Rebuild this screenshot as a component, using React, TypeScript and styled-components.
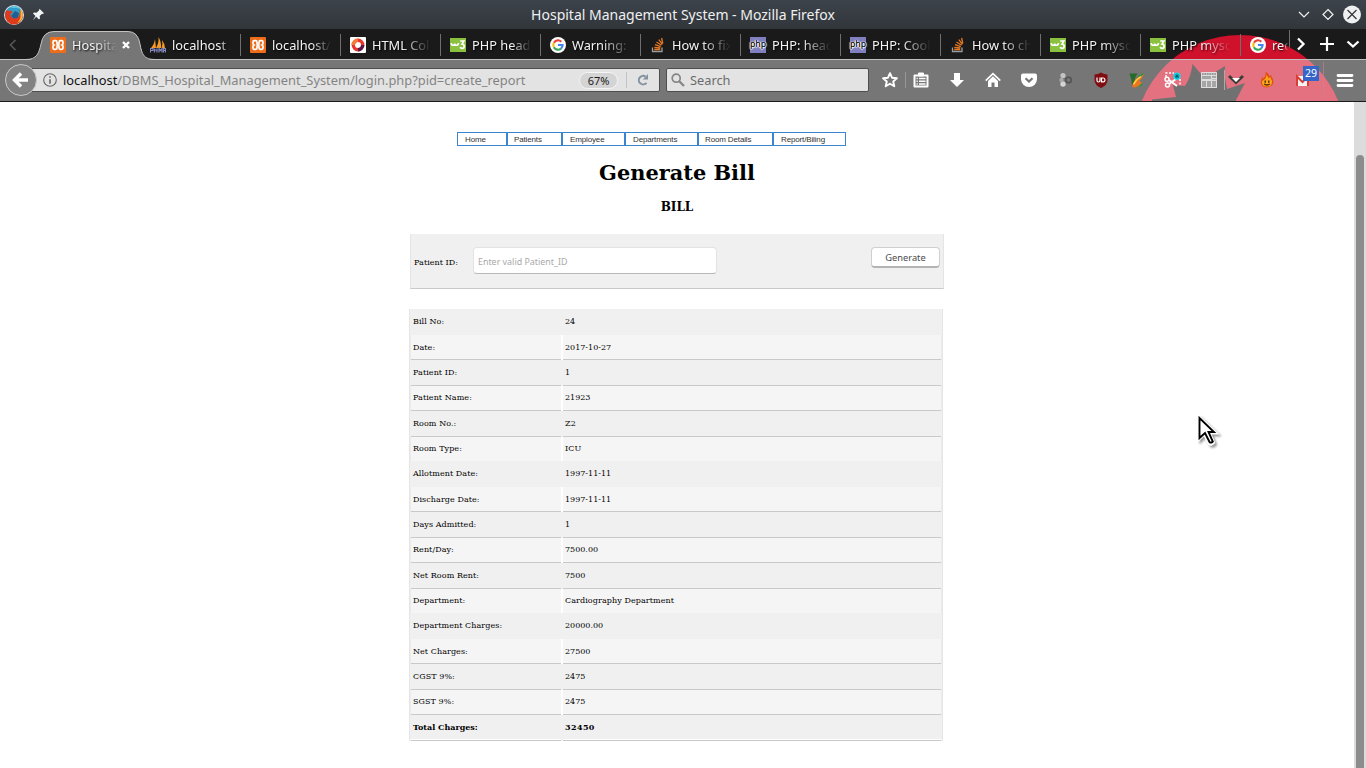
import React from "react";
import styled, { createGlobalStyle } from "styled-components";

const GlobalStyle = createGlobalStyle`
  * { box-sizing: border-box; }
  html, body { margin: 0; padding: 0; overflow: hidden; background: #fff; }
`;

const Window = styled.div`
  width: 1366px;
  height: 768px;
  display: flex;
  flex-direction: column;
  overflow: hidden;
  position: relative;
  font-family: "Noto Sans", sans-serif;
  background: #fff;
`;

const TitleBar = styled.header`
  height: 29px;
  flex: none;
  display: grid;
  grid-template-columns: 100px 1fr 100px;
  align-items: center;
  background: linear-gradient(#3d434b, #30363a);
`;
const TitleLeft = styled.div`
  display: flex;
  align-items: center;
  gap: 8px;
  padding-left: 4px;
`;
const Title = styled.div`
  text-align: center;
  color: #eff0f1;
  font-size: 14px;
  line-height: 29px;
  white-space: nowrap;
`;
const TitleRight = styled.div`
  display: flex;
  align-items: center;
  justify-content: flex-end;
  padding-right: 5px;
`;

const Chrome = styled.div`
  position: relative;
  flex: none;
  height: 73px;
  display: flex;
  flex-direction: column;
  background: #1a1a1a;
`;
const Persona = styled.svg<{ $left: number }>`
  position: absolute;
  left: ${(p) => p.$left}px;
  top: 0;
`;
const TabStrip = styled.div`
  height: 30px;
  display: flex;
  position: relative;
`;
const ScrollLeft = styled.div`
  width: 28px;
  padding: 7px 0 0 8px;
`;
const ActiveTab = styled.div`
  width: 122px;
  height: 30px;
  position: relative;
  display: flex;
  align-items: center;
  padding: 2px 0 0 22px;
`;
const ActiveShape = styled.svg`
  position: absolute;
  left: -2px;
  top: 0;
`;
const Tab = styled.div<{ $width?: number }>`
  width: ${(p) => p.$width ?? 100}px;
  height: 30px;
  flex: none;
  display: flex;
  align-items: center;
  padding-top: 2px;
  position: relative;
`;
const Separator = styled.i<{ $h?: number; $space?: string }>`
  width: 1px;
  height: ${(p) => p.$h ?? 22}px;
  margin: ${(p) => p.$space ?? "0"};
  flex: none;
  background: #6f6f6f;
`;
const TabIcon = styled.span`
  width: 16px;
  height: 16px;
  flex: none;
  position: relative;
  display: block;
  svg { display: block; }
`;
const TabLabel = styled.span<{ $width?: number; $fade?: number }>`
  position: relative;
  margin-left: 6px;
  width: ${(p) => p.$width ?? 60}px;
  height: 22px;
  flex: none;
  overflow: hidden;
  white-space: nowrap;
  color: #f4f4f4;
  font-size: 12.8px;
  line-height: 22px;
  text-shadow: 1px 1px 2px #000;
  mask-image: linear-gradient(to right, #000 ${(p) => p.$fade ?? 50}%, transparent 98%);
`;
const TabClose = styled.svg`
  position: relative;
  margin-left: 4px;
`;
const TabTools = styled.div`
  display: flex;
  align-items: center;
  svg { flex: none; position: relative; }
`;
const ToolSlot = styled.span<{ $left: number }>`
  display: flex;
  margin-left: ${(p) => p.$left}px;
`;

const NavBar = styled.div`
  height: 43px;
  display: flex;
  align-items: flex-start;
  background: #767676;
  border-top: 1px solid #c0c0c0;
  border-bottom: 1px solid #1a1a1a;
  padding-left: 4px;
`;
const NavBarContent = styled.div`
  display: flex;
  align-items: center;
  position: relative;
  height: 40px;
`;
const BackButton = styled.svg`
  flex: none;
  position: relative;
  z-index: 1;
`;
const UrlBar = styled.div`
  width: 630px;
  height: 24px;
  margin-left: -8px;
  display: flex;
  align-items: center;
  background: #e3e3e3;
  border: 1px solid #4e4e4e;
  border-radius: 2px;
  padding: 0 10px 0 12px;
`;
const UrlText = styled.div`
  flex: 1;
  margin-left: 6px;
  font-size: 12.85px;
  line-height: 22px;
  color: #838383;
  white-space: nowrap;
  b { color: #111; font-weight: 400; }
`;
const ZoomBadge = styled.span`
  width: 39px;
  height: 17px;
  border: 1px solid #f5f5f5;
  border-radius: 9px;
  background: #d4d4d4;
  color: #1b1b1b;
  text-align: center;
  font-size: 11px;
  line-height: 15px;
`;
const UrlDivider = styled.i`
  width: 1px;
  height: 16px;
  margin: 0 10px 0 8px;
  background: #c3c3c3;
`;
const SearchBar = styled.div`
  width: 203px;
  height: 24px;
  margin-left: 6px;
  display: flex;
  align-items: center;
  gap: 5px;
  padding-left: 4px;
  background: #e3e3e3;
  border: 1px solid #4e4e4e;
  border-radius: 2px;
  color: #6b6b6b;
  font-size: 12.8px;
  line-height: 22px;
`;
const ToolIcon = styled.span<{ $left: number; $w?: number }>`
  position: relative;
  display: flex;
  justify-content: center;
  flex: none;
  width: ${(p) => p.$w ?? 18}px;
  margin-left: ${(p) => p.$left}px;
  svg { display: block; flex: none; overflow: visible; }
`;
const MailBadge = styled.span`
  position: absolute;
  left: 1299px;
  top: 6px;
  width: 16px;
  height: 15px;
  background: #3665c8;
  color: #fff;
  font-size: 10.5px;
  line-height: 14px;
  text-align: center;
`;

const Viewport = styled.div`
  flex: 1;
  display: flex;
  min-height: 0;
`;
const Page = styled.main`
  width: 1354px;
  display: flex;
  flex-direction: column;
  align-items: flex-start;
  font-family: "DejaVu Serif", serif;
  color: #000;
`;
const ScrollTrack = styled.div`
  width: 12px;
  background: #dcdcdc;
  padding: 53px 2px 0 2px;
`;
const ScrollThumb = styled.div`
  height: 640px;
  border-radius: 4px;
  background: #8c8c8c;
`;

const Menu = styled.nav`
  display: flex;
  margin: 30px 0 0 457px;
`;
const MenuItem = styled.a<{ $w: number; $pad?: number }>`
  width: ${(p) => p.$w}px;
  height: 14px;
  border: 1px solid #3b84d0;
  padding-left: ${(p) => p.$pad ?? 7}px;
  font-family: "Liberation Sans", sans-serif;
  font-size: 8px;
  letter-spacing: -0.14px;
  line-height: 13px;
  color: #333;
  white-space: nowrap;
`;
const Heading = styled.h1`
  width: 1354px;
  margin: 14px 0 0;
  text-align: center;
  font-size: 20.9px;
  line-height: 26px;
`;
const SubHeading = styled.h2`
  width: 1354px;
  margin: 13px 0 0;
  text-align: center;
  font-size: 12px;
  line-height: 16px;
`;
const BillForm = styled.form`
  width: 534px;
  height: 55px;
  margin: 19px 0 0 410px;
  display: flex;
  align-items: flex-start;
  background: #f0f0f0;
  border: solid #e5e5e5;
  border-width: 0 1px;
  border-bottom: 1px solid #c9c9c9;
  padding: 13px 3px 0;
`;
const FormLabel = styled.label`
  width: 59px;
  font-size: 8px;
  letter-spacing: 0.05px;
  line-height: 31px;
  white-space: nowrap;
`;
const PatientInput = styled.input`
  width: 244px;
  height: 27px;
  border: 1px solid #e3e3e3;
  border-bottom: 1px solid #b8b8b8;
  border-radius: 4px;
  background: #fff;
  padding: 2px 4px 0;
  font-family: "Noto Sans", sans-serif;
  font-size: 8.9px;
  outline: none;
  &::placeholder { color: #a9a9a9; opacity: 1; }
`;
const GenerateButton = styled.button`
  width: 69px;
  height: 21px;
  margin-left: auto;
  border: 1px solid #cfcfcf;
  border-bottom: 2px solid #b4b4b4;
  border-radius: 4px;
  background: #fff;
  padding: 1px 0 0;
  color: #4a4a4a;
  font-family: "Noto Sans", sans-serif;
  font-size: 9.3px;
  line-height: 18px;
`;
const BillTable = styled.div`
  width: 534px;
  margin: 20px 0 0 409px;
`;
const BillRow = styled.div<{ $h: number; $alt: boolean; $bold: boolean }>`
  height: ${(p) => p.$h}px;
  display: flex;
  gap: 2px;
  background: ${(p) => (p.$alt ? "#fff" : "#f0f0f0")};
  border: solid #e5e5e5;
  border-width: 0 1px;
  box-shadow: ${(p) => (p.$alt ? "inset 1px 0 #ebebeb, inset -1px 0 #ebebeb" : "none")};
  padding: 0 1px;
  font-size: 8px;
  font-weight: ${(p) => (p.$bold ? 700 : 400)};
`;
const Cell = styled.div<{ $w: number; $track: number; $alt: boolean; $line: boolean; $lift: boolean; $last: boolean }>`
  width: ${(p) => p.$w}px;
  padding-left: 2px;
  letter-spacing: ${(p) => p.$track}px;
  background: ${(p) => (p.$alt ? "#f5f5f5" : "#f0f0f0")};
  border-bottom: ${(p) => (p.$line ? "1px solid #c9c9c9" : "0")};
  box-shadow: ${(p) => (p.$last ? "inset 0 -1px #fff" : "none")};
  line-height: ${(p) => (p.$lift ? 23 : 25)}px;
  white-space: nowrap;
`;

const Cursor = styled.svg`
  position: absolute;
  left: 1196px;
  top: 415px;
  filter: drop-shadow(2px 2px 1px rgba(0, 0, 0, 0.4));
`;

const XamppIcon = () => (
  <svg width="16" height="16" viewBox="0 0 16 16">
    <rect width="16" height="16" rx="1" fill="#ee6d1b" />
    <path d="M7 6.700V5.200q0-1.500-1.500-1.500H4.300Q3 3.700 3 5v1.500Q3 8 4.500 8 3 8 3 9.500V11q0 1.300 1.300 1.300h1.200Q7 12.300 7 11V9.300q0-1.300 1-1.300t1 1.300V11q0 1.300 1.500 1.300h1.200Q13 12.300 13 11V9.500Q13 8 11.500 8 13 8 13 6.500V5q0-1.300-1.300-1.300h-1.200Q9 3.700 9 5.200v1.500Q9 8 8 8T7 6.700z" fill="none" stroke="#fff" strokeWidth="1.700" strokeLinejoin="round" />
  </svg>
);
const PmaIcon = () => (
  <svg width="16" height="16" viewBox="0 0 16 16">
    <path d="M1 11Q4 8 5 2l1 9z M6 11Q9 6 8.500 0q3 5 2.500 11z M11.500 11q1.500-4 .5-8 3 4 3 8z" fill="#f59a23" />
    <path d="M.5 15.500v-4h2.500v2H1M4.500 11.500v4M4.500 13h2.500M7 11.500v4M9 15.500v-4l1.500 2 1.500-2v4M13.500 15.500v-4H15.500v4M13.500 13.500h2" fill="none" stroke="#8588bd" strokeWidth="1.200" />
  </svg>
);
const HtmlColorIcon = () => (
  <svg width="16" height="16" viewBox="0 0 16 16">
    <rect width="16" height="16" rx="1" fill="#fff" />
    <circle cx="8" cy="8" r="4.700" fill="none" stroke="#e8352e" strokeWidth="3.400" />
    <path d="M8 3.300a4.700 4.700 0 0 0-4.700 4.700" fill="none" stroke="#f47b35" strokeWidth="3.400" />
    <path d="M12.700 8A4.700 4.700 0 0 1 8 12.700" fill="none" stroke="#5b1748" strokeWidth="3.400" />
  </svg>
);
const W3Icon = () => (
  <svg width="16" height="16" viewBox="0 0 16 16">
    <rect y="1" width="16" height="14" fill="#8ac240" />
    <path d="M1.300 6q0 2.300 1.700 2.300T4.700 6.500q0 1.800 1.700 1.800T8.600 6" fill="none" stroke="#fff" strokeWidth="1.600" />
    <path d="M10.200 4h3.600l-1.800 3q2.200.2 2.200 2.200t-2.100 2.200q-1.400 0-2-1.200" fill="none" stroke="#fff" strokeWidth="1.700" />
  </svg>
);
const GoogleIcon = () => (
  <svg width="16" height="16" viewBox="0 0 16 16">
    <circle cx="8" cy="8" r="8" fill="#fff" />
    <g fill="none" strokeWidth="2.100">
      <path d="M11.300 4.700A4.700 4.700 0 0 0 3.900 5.700" stroke="#ea4335" />
      <path d="M3.900 5.700a4.700 4.700 0 0 0 0 4.600" stroke="#fbbc05" />
      <path d="M3.900 10.300a4.700 4.700 0 0 0 7.100 1.300" stroke="#34a853" />
      <path d="M11 11.600A4.700 4.700 0 0 0 12.600 8H8" stroke="#4285f4" />
    </g>
  </svg>
);
const StackIcon = () => (
  <svg width="16" height="16" viewBox="0 0 16 16">
    <path d="M2.500 10.500v4h9.500v-4" fill="none" stroke="#9a9da0" strokeWidth="1.300" />
    <path d="M4.200 12.500h6M4.300 10.300l6 .7M5 7.700l5.700 1.900M6.500 5l5 3.200M8.800 2.700l3.600 4.600M11.600 1l1.200 5.500" stroke="#e87922" strokeWidth="1.300" fill="none" />
  </svg>
);
const PhpMark = styled.span`
  display: block;
  width: 16px;
  height: 16px;
  background: #8080c0;
  color: #000;
  font-family: "Noto Sans", sans-serif;
  font-size: 8.7px;
  font-weight: 500;
  line-height: 15px;
  letter-spacing: -0.1px;
  text-align: center;
  text-shadow: 0 0 1px #fff, 1px 0 1px #fff, -1px 0 1px #fff, 0 1px 1px #fff;
`;
const PhpIcon = () => <PhpMark>php</PhpMark>;

const tabs: { icon: React.FC; label: string; fade?: number }[] = [
  { icon: PmaIcon, label: "localhost /", fade: 80 },
  { icon: XamppIcon, label: "localhost/", fade: 66 },
  { icon: HtmlColorIcon, label: "HTML Col" },
  { icon: W3Icon, label: "PHP head", fade: 66 },
  { icon: GoogleIcon, label: "Warning: '" },
  { icon: StackIcon, label: "How to fix" },
  { icon: PhpIcon, label: "PHP: head" },
  { icon: PhpIcon, label: "PHP: Cook" },
  { icon: StackIcon, label: "How to ch" },
  { icon: W3Icon, label: "PHP mysq" },
  { icon: W3Icon, label: "PHP mysq" },
];

type Row = { name: string; value: string; h: number; line?: boolean; lift?: boolean };
const rows: Row[] = [
  { name: "Bill No:", value: "24", h: 26 },
  { name: "Date:", value: "2017-10-27", h: 25, line: true },
  { name: "Patient ID:", value: "1", h: 26, line: true },
  { name: "Patient Name:", value: "21923", h: 25, line: true, lift: true },
  { name: "Room No.:", value: "Z2", h: 26, line: true },
  { name: "Room Type:", value: "ICU", h: 24, lift: true },
  { name: "Allotment Date:", value: "1997-11-11", h: 26 },
  { name: "Discharge Date:", value: "1997-11-11", h: 25, line: true },
  { name: "Days Admitted:", value: "1", h: 26, line: true },
  { name: "Rent/Day:", value: "7500.00", h: 25, line: true, lift: true },
  { name: "Net Room Rent:", value: "7500", h: 26, line: true },
  { name: "Department:", value: "Cardiography Department", h: 24, lift: true },
  { name: "Department Charges:", value: "20000.00", h: 26 },
  { name: "Net Charges:", value: "27500", h: 25, line: true },
  { name: "CGST 9%:", value: "2475", h: 26, line: true },
  { name: "SGST 9%:", value: "2475", h: 25, line: true, lift: true },
  { name: "Total Charges:", value: "32450", h: 26, line: true },
];

const menu: [string, number, number][] = [
  ["Home", 50, 7],
  ["Patients", 55, 6],
  ["Employee", 63, 7],
  ["Departments", 73, 7],
  ["Room Details", 75, 6],
  ["Report/Biling", 73, 7],
];

export default function App() {
  return (
    <Window>
      <GlobalStyle />
      <TitleBar>
        <TitleLeft>
          <svg width="20" height="20" viewBox="0 0 20 20">
            <circle cx="10" cy="10" r="10" fill="#dfe3e6" />
            <circle cx="10" cy="10" r="9" fill="#2f9fc9" />
            <path d="M10 1a9 9 0 0 1 7 3q-3-1-5-1t-6-.6z" fill="#5fc6de" />
            <path d="M11 6l4 2-1 5-4 1-3-3z" fill="#1f5f91" />
            <path d="M2.500 5Q4 6 6 5.500L9 7 6.500 9q0 4 4 4.500 3 0 4.500-2.500 1.500-3 .5-6.500Q19 7 19 11a9 9 0 0 1-18-1q0-3 1.500-5z" fill="#dd3b1c" />
            <path d="M16.500 4q3.500 4 2 8.500-1.500 4-5.500 5.500 4-4 3.500-8z" fill="#f5b53c" />
          </svg>
          <svg width="13" height="13" viewBox="0 0 13 13">
            <path d="M7.500.8l4.500 4.400-1.200.8-.8-.3-2.300 2.300.3 2.500-1 1L4.300 8.800.8 12.200l2.700-4.200L1 5.500l1-1 2.500.3 2.500-2.300z" fill="#f4f5f6" />
          </svg>
        </TitleLeft>
        <Title>Hospital Management System - Mozilla Firefox</Title>
        <TitleRight>
          <svg width="70" height="20" viewBox="0 0 70 20" fill="none" stroke="#f2f2f2" strokeWidth="1.200">
            <path d="M7 7l5 5 5-5M36 4.500l5 5-5 5-5-5z" transform="translate(1 0)" />
            <circle cx="61" cy="9.500" r="9" fill="#eff0f1" stroke="none" />
            <path d="M56.500 5l9 9M65.500 5l-9 9" stroke="#31363b" />
          </svg>
        </TitleRight>
      </TitleBar>

      <Chrome>
        <TabStrip>
          <Persona $left={1130} width="236" height="30" viewBox="1130 29 236 30">
            <circle cx="1240" cy="141" r="106" fill="#d0112b" />
          </Persona>
          <ScrollLeft>
            <svg width="10" height="16" viewBox="0 0 10 16">
              <path d="M7.500 3L2.500 8l5 5" fill="none" stroke="#555" strokeWidth="1.700" />
            </svg>
          </ScrollLeft>
          <ActiveTab>
            <ActiveShape width="132" height="31" viewBox="0 0 132 31">
              <path d="M0 31C11 31 13 24 15 15Q17 2.500 28 2.500H102Q112 2.500 114 15C116 26 118 31 129 31z" fill="#767676" />
              <path d="M0 30.500C11 30.500 13 24 15 15Q17 2.500 28 2.500H102Q112 2.500 114 15C116 26 118 30.500 129 30.500" fill="none" stroke="#c3c3c3" />
            </ActiveShape>
            <TabIcon><XamppIcon /></TabIcon>
            <TabLabel $width={46}>Hospita</TabLabel>
            <TabClose width="8" height="8" viewBox="0 0 8 8">
              <path d="M1 1l6 6M7 1L1 7" stroke="#fff" strokeWidth="2.400" />
            </TabClose>
          </ActiveTab>
          {tabs.map(({ icon: Icon, label, fade }, i) => (
            <Tab key={i}>
              <TabIcon><Icon /></TabIcon>
              <TabLabel $fade={fade}>{label}</TabLabel>
              <Separator $space="0 0 0 8px" />
            </Tab>
          ))}
          <Tab $width={39}>
            <TabIcon><GoogleIcon /></TabIcon>
            <TabLabel $width={17} $fade={60}>rec</TabLabel>
          </Tab>
          <TabTools>
            <Separator $h={29} />
            <ToolSlot $left={6}>
              <svg width="10" height="16" viewBox="0 0 10 16" fill="none" stroke="#fff" strokeWidth="2.300">
                <path d="M2 2.500L7.500 8 2 13.500" />
              </svg>
            </ToolSlot>
            <ToolSlot $left={14}>
              <svg width="14" height="14" viewBox="0 0 14 14">
                <path d="M7 0v14M0 7h14" stroke="#fff" strokeWidth="2.200" />
              </svg>
            </ToolSlot>
            <ToolSlot $left={12}>
              <svg width="14" height="14" viewBox="0 0 14 14" fill="none" stroke="#fff" strokeWidth="2.300">
                <path d="M1.500 4.500L7 9.500l5.500-5" />
              </svg>
            </ToolSlot>
          </TabTools>
        </TabStrip>

        <NavBar>
          <NavBarContent>
            <Persona $left={1126} width="236" height="41" viewBox="1130 60 236 41">
              <circle cx="1240" cy="141" r="106" fill="#e3717f" />
              <path d="M1152 99.500L1176 97l-3-12 12 1q6-9 7.500-22L1201 74h11l13-8-.500 9 2.500 14 18-6-10 19h-83z" fill="#717171" />
            </Persona>
            <BackButton width="34" height="34" viewBox="0 0 34 34">
              <circle cx="17" cy="17" r="15.500" fill="#828282" stroke="#c9c9c9" />
              <path d="M17 10.500L10.500 17l6.500 6.500M11 17h13" fill="none" stroke="#fff" strokeWidth="3.400" />
            </BackButton>
            <UrlBar>
              <svg width="14" height="14" viewBox="0 0 14 14" fill="none" stroke="#666" strokeWidth="1.100">
                <circle cx="7" cy="7" r="6.300" />
                <path d="M7 6.200v4.500M7 3.300v1.500" strokeWidth="1.600" />
              </svg>
              <UrlText><b>localhost</b>/DBMS_Hospital_Management_System/login.php?pid=create_report</UrlText>
              <ZoomBadge>67%</ZoomBadge>
              <UrlDivider />
              <svg width="12" height="12" viewBox="0 0 12 12">
                <path d="M8.500 2.500A4.300 4.300 0 1 0 9.500 8.800" fill="none" stroke="#8593a0" strokeWidth="2" />
                <path d="M11 0v5.500H5.800z" fill="#8593a0" />
              </svg>
            </UrlBar>
            <SearchBar>
              <svg width="14" height="14" viewBox="0 0 14 14" fill="none" stroke="#858585">
                <circle cx="5.200" cy="5.200" r="4" strokeWidth="1.700" />
                <path d="M8 8l5 5" strokeWidth="2.300" />
              </svg>
              Search
            </SearchBar>
            <ToolIcon $left={12}>
              <svg width="18" height="18" viewBox="0 0 18 18">
                <path d="M9 2.200l2 4.500 4.900.5-3.700 3.300 1.100 4.800L9 12.800l-4.300 2.500 1.100-4.800-3.700-3.300 4.900-.5z" fill="none" stroke="#fff" strokeWidth="1.900" strokeLinejoin="round" />
              </svg>
            </ToolIcon>
            <ToolIcon $left={6} $w={1}>
              <svg width="1" height="16"><rect width="1" height="16" fill="#979797" /></svg>
            </ToolIcon>
            <ToolIcon $left={6}>
              <svg width="16" height="16" viewBox="0 0 16 16">
                <path d="M1.500 3.500h13v11h-13z" fill="none" stroke="#fff" strokeWidth="2" strokeLinejoin="round" />
                <path d="M5.500 1h5v3h-5z" fill="#fff" stroke="#fff" />
                <path d="M3.500 6.500h1.300M3.500 9.200h1.300M3.500 12h1.300M6 6.500h6.500M6 9.200h6.500M6 12h6.500" stroke="#fff" strokeWidth="1.400" />
              </svg>
            </ToolIcon>
            <ToolIcon $left={18}>
              <svg width="16" height="16" viewBox="0 0 16 16"><path d="M5 1h6v7h4l-7 7-7-7h4z" fill="#fff" /></svg>
            </ToolIcon>
            <ToolIcon $left={18}>
              <svg width="16" height="16" viewBox="0 0 16 16">
                <path d="M.7 8.700L8 1.700l7.300 7" fill="none" stroke="#fff" strokeWidth="1.700" />
                <path d="M3 9l5-4.700L13 9v6H9.500v-4.500h-3V15H3z" fill="#fff" />
              </svg>
            </ToolIcon>
            <ToolIcon $left={18}>
              <svg width="16" height="16" viewBox="0 0 16 16">
                <path d="M2 1.500h12q2 0 2 2V7A8 8 0 0 1 0 7V3.500q0-2 2-2z" fill="#fff" />
                <path d="M4.500 6.200L8 9.500l3.500-3.300" fill="none" stroke="#767676" strokeWidth="2.200" />
              </svg>
            </ToolIcon>
            <ToolIcon $left={18}>
              <svg width="16" height="16" viewBox="0 0 16 16">
                <circle cx="6" cy="3.500" r="2.600" fill="#c4c4c4" />
                <circle cx="6" cy="12" r="2.700" fill="#d5d5d5" />
                <circle cx="4.500" cy="8" r="2.200" fill="#aaa" />
                <circle cx="11.500" cy="8" r="2.800" fill="none" stroke="#515151" strokeWidth="1.400" />
              </svg>
            </ToolIcon>
            <ToolIcon $left={18}>
              <svg width="16" height="16" viewBox="0 0 16 16">
                <path d="M8 .5q3 2 6.500 2V8q0 5-6.500 8Q1.500 13 1.500 8V2.500Q5 2.500 8 .5z" fill="#800d12" />
                <path d="M4 5.500v3q0 1.500 1.500 1.500T7 8.500v-3M8.500 6h1.700q1.800 0 1.800 1.900t-1.800 1.900H8.500z" fill="none" stroke="#fff" strokeWidth="1.200" />
              </svg>
            </ToolIcon>
            <ToolIcon $left={18}>
              <svg width="16" height="16" viewBox="0 0 16 16">
                <path d="M.5 1.500h8L6 6l-.500 4L3 14.500 2.500 8z" fill="#256b2a" />
                <path d="M3 15Q4 8 9 5.500 12 4 15.500 1.500L12 7.500l-2 1.500 3 1.500-3 4-4 1z" fill="#ee7420" />
                <path d="M8 5.500Q11 1.500 16 1l-4 3.500zM7 15q4-1 6.500-4.500L13 14z" fill="#2f9445" />
                <path d="M4.500 12.500q3-5.500 7.500-8" stroke="#f7dc4a" strokeWidth="1.300" fill="none" />
              </svg>
            </ToolIcon>
            <ToolIcon $left={18}>
              <svg width="18" height="16" viewBox="0 0 18 16">
                <path d="M2 5V1h8M16 7v6" fill="none" stroke="#fff" strokeWidth="1.500" strokeDasharray="2 1.500" />
                <g fill="none" stroke="#fff" strokeWidth="1.500">
                  <circle cx="3" cy="7.300" r="2" /><circle cx="3.500" cy="13" r="2" />
                  <path d="M5 8l8 6M5 12l7-5" strokeWidth="2" />
                </g>
                <circle cx="13" cy="4.200" r="3.700" fill="#20dcea" />
                <path d="M13 1.500v5.400M10.500 4.200h5M11.300 2.500l3.500 3.500M14.800 2.500l-3.500 3.500" stroke="#064a66" strokeWidth=".8" />
              </svg>
            </ToolIcon>
            <ToolIcon $left={18}>
              <svg width="16" height="16" viewBox="0 0 16 16">
                <g fill="#a5a5a5" stroke="#dedede">
                  <path d="M.5.5h15v15H.5z" fill="#c0c0c0" />
                  <path d="M.5 3.500h10v4H.5zM10.500 3.500h5v3h-5zM.5 8.500h5v7h-5zM5.500 8.500h5v7h-5zM10.500 8.500h5v7h-5z" />
                </g>
                <path d="M1 2h14" stroke="#777" strokeDasharray="1.500 1" />
              </svg>
            </ToolIcon>
            <ToolIcon $left={6} $w={1}>
              <svg width="1" height="20"><rect width="1" height="20" fill="#aaa" /></svg>
            </ToolIcon>
            <ToolIcon $left={2}>
              <svg width="18" height="12" viewBox="0 0 18 12">
                <path d="M2 2l7 6.500L16 2" fill="none" stroke="#3c3c3c" strokeWidth="3" />
                <path d="M5 4h8L9 8z" fill="#fff" />
              </svg>
            </ToolIcon>
            <ToolIcon $left={13}>
              <svg width="16" height="16" viewBox="0 0 16 16">
                <path d="M6.500-.5Q10 1.500 10.500 4.500L12 2.800Q12.300 5 13.800 7q1.200 3.500-.5 6-2 2.500-5.300 2.500T2.700 13Q1 10 2.500 7.500L3 5l1.500 1.500Q7.500 3.500 6.500-.5z" fill="#e2500c" />
                <path d="M7.500 3Q9.500 5 9.500 6.500l2-1.500q.3 2 1.500 4 .5 5.500-5 5.500t-5-5.500L5 8q2.500-2 2.500-5z" fill="#fba51d" />
                <path d="M6.200 8.500v2.200M9.800 8.500v2.200M5.200 12q2.800 2 5.600 0" stroke="#4a2006" strokeWidth="1.300" fill="none" />
              </svg>
            </ToolIcon>
            <ToolIcon $left={18}>
              <svg width="16" height="16" viewBox="0 0 16 16">
                <path d="M1 4h13v10H1z" fill="#f4f4f4" />
                <path d="M2 14V4.500l5.500 5.500L13 4.500V14" fill="none" stroke="#dc3c33" strokeWidth="2" />
              </svg>
            </ToolIcon>
            <ToolIcon $left={11} $w={1}>
              <svg width="1" height="36"><rect width="1" height="36" fill="#c9848c" opacity=".6" /></svg>
            </ToolIcon>
            <ToolIcon $left={12}>
              <svg width="16" height="13" viewBox="0 0 16 13">
                <path d="M1 1.500h14M1 6.500h14M1 11.500h14" stroke="#fff" strokeWidth="2.800" strokeLinecap="round" />
              </svg>
            </ToolIcon>
            <MailBadge>29</MailBadge>
          </NavBarContent>
        </NavBar>
      </Chrome>

      <Viewport>
        <Page>
          <Menu>
            {menu.map(([label, w, pad]) => (
              <MenuItem key={label} $w={w} $pad={pad}>{label}</MenuItem>
            ))}
          </Menu>
          <Heading>Generate Bill</Heading>
          <SubHeading>BILL</SubHeading>
          <BillForm>
            <FormLabel>Patient ID:</FormLabel>
            <PatientInput placeholder="Enter valid Patient_ID" />
            <GenerateButton type="button">Generate</GenerateButton>
          </BillForm>
          <BillTable>
            {rows.map(({ name, value, h, line = false, lift = false }, i) => {
              const alt = i % 2 === 1;
              const last = i === rows.length - 1;
              const cell = { $alt: alt, $line: line, $lift: lift, $last: last };
              const valueTrack = last ? 0.4 : /^\d/.test(value) ? 0 : 0.09;
              return (
                <BillRow key={name} $h={h} $alt={alt} $bold={last}>
                  <Cell $w={150} $track={last ? 0 : 0.07} {...cell}>{name}</Cell>
                  <Cell $w={378} $track={valueTrack} {...cell}>{value}</Cell>
                </BillRow>
              );
            })}
          </BillTable>
        </Page>
        <ScrollTrack><ScrollThumb /></ScrollTrack>
      </Viewport>

      <Cursor width="24" height="34" viewBox="0 0 24 34">
        <path d="M3 2v22l5.500-5 4.500 9.500q2 2 4.500-1L13.500 18H20z" fill="#fff" stroke="#fff" strokeWidth="3" />
        <path d="M3.500 3v20l5.500-5 4.500 9q1.500 1.500 3.300-.5L12.500 17H18z" fill="#fff" stroke="#000" strokeWidth="1.900" />
      </Cursor>
    </Window>
  );
}
